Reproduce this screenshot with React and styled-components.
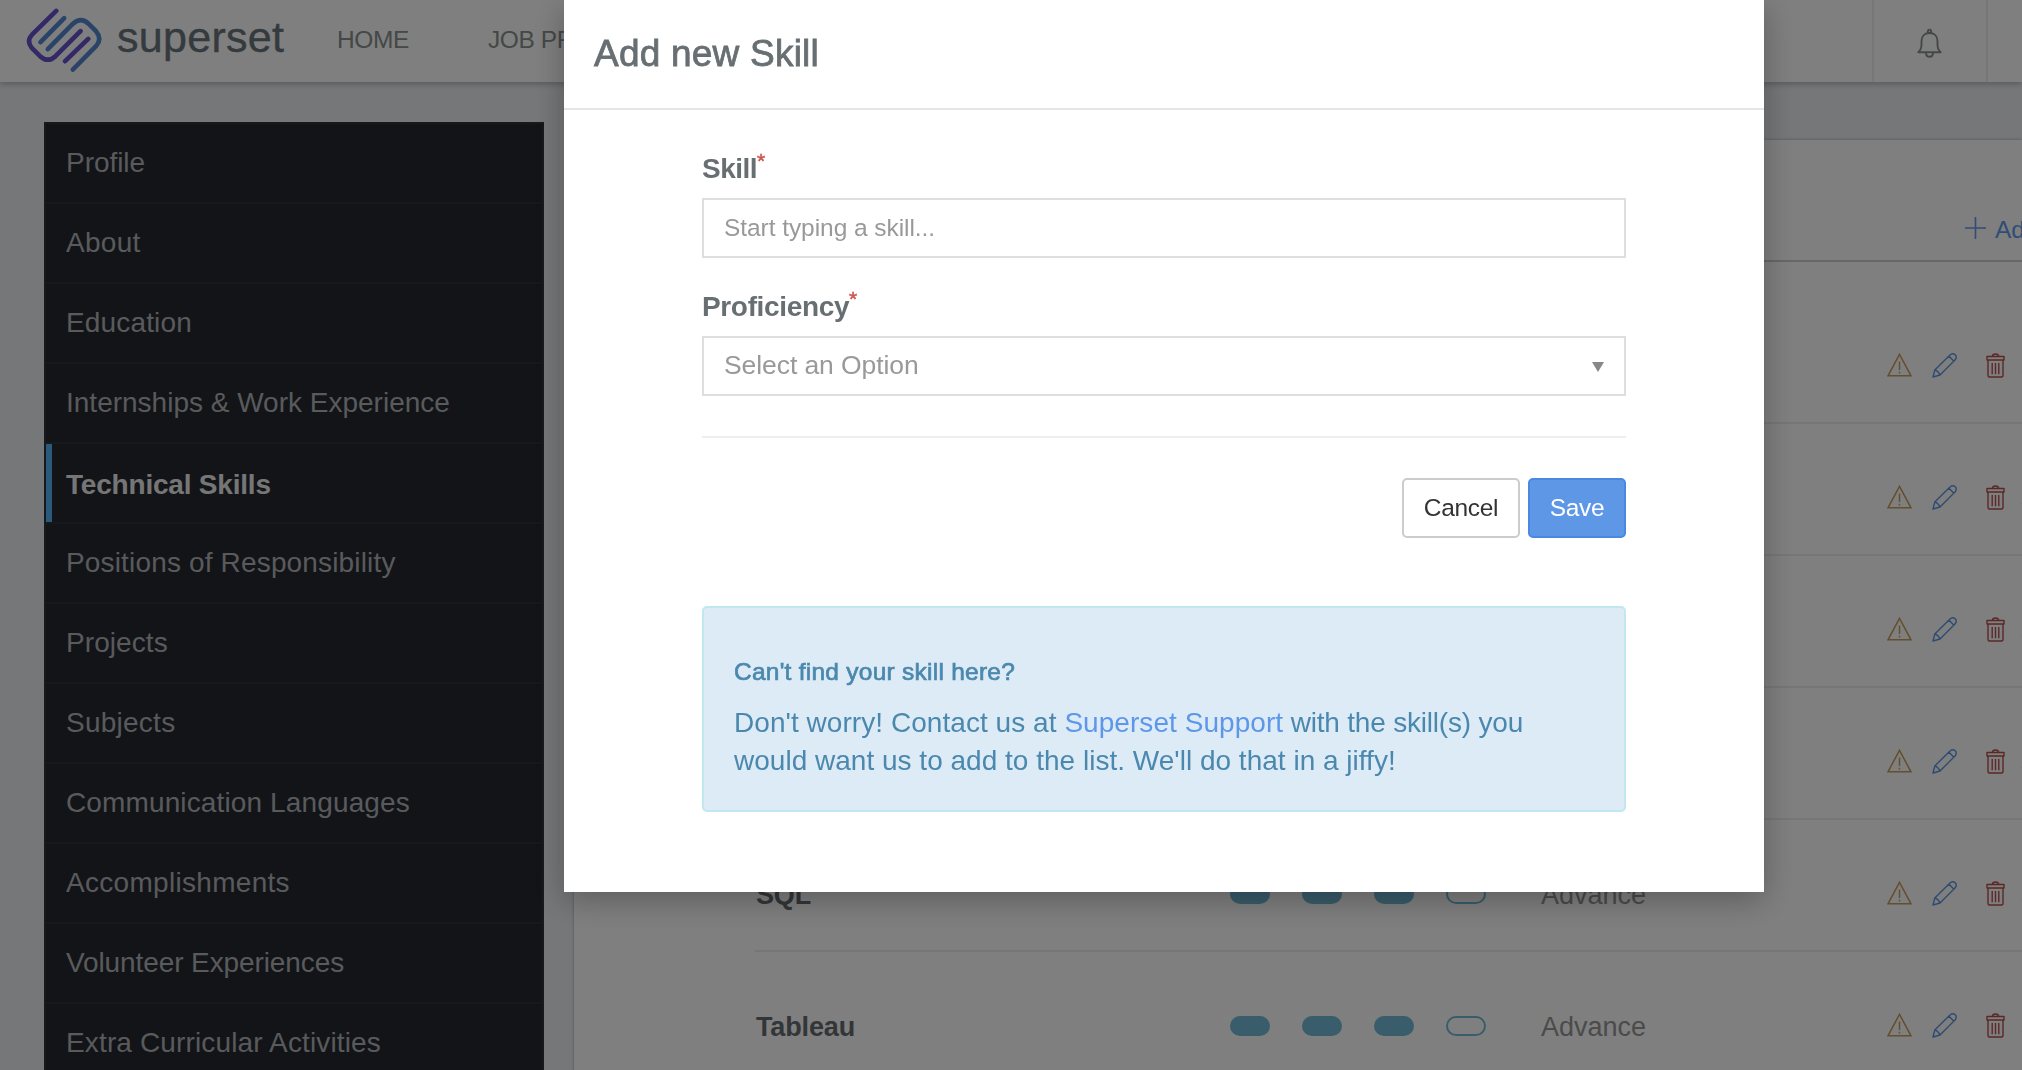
import React from 'react';
import styled, { createGlobalStyle } from 'styled-components';

const GlobalStyle = createGlobalStyle`
  * { box-sizing: border-box; }
  body {
    margin: 0;
    overflow: hidden;
    background: #ebeef2;
    font-family: "Liberation Sans", Arial, sans-serif;
    color: #676f73;
  }
  p, h2, h4, ul { margin: 0; padding: 0; }
  svg { display: block; flex: none; fill: none; }
`;

const Page = styled.div`
  height: 1070px;
  overflow: hidden;
`;

/* ---------- top bar ---------- */

const TopBar = styled.header`
  position: relative;
  display: flex;
  height: 82px;
  background: #fff;
  box-shadow: 0 2px 6px rgba(0, 0, 0, 0.25);
`;

const Brand = styled.div`
  display: flex;
  width: 337px;
  padding-left: 24px;
`;

const BrandName = styled.span`
  margin-left: 11px;
  font-size: 43px;
  line-height: 75px;
  letter-spacing: 0.3px;
  color: #69757a;
  -webkit-text-stroke: 0.4px #69757a;
`;

const NavLink = styled.a`
  width: 151px;
  font-size: 24.5px;
  line-height: 80px;
  letter-spacing: -0.4px;
  white-space: nowrap;
  color: #88908d;
`;

const BarActions = styled.div`
  display: flex;
  margin-left: auto;
`;

const BarCell = styled.div`
  display: flex;
  justify-content: center;
  width: ${(p) => p.$width}px;
  padding-top: 28px;
  border-left: 2px solid #eee;
  color: #87918e;
`;

/* ---------- sidebar ---------- */

const Content = styled.main`
  display: flex;
  gap: 30px;
  padding: 40px 0 0 44px;
`;

const Sidebar = styled.ul`
  flex: none;
  width: 500px;
  height: 1000px;
  border: 2px solid #303335;
  background: #252830;
  list-style: none;
`;

const SidebarItem = styled.li`
  height: 80px;
  padding-left: 20px;
  border-bottom: 2px solid #2e3132;
  font-size: 28px;
  line-height: 78px;
  letter-spacing: ${(p) => p.$tracking ?? 0.08}px;
  color: #b2b4b8;
  ${(p) =>
    p.$active &&
    `
    box-shadow: inset 6px 0 #58b4fa;
    font-weight: 700;
    letter-spacing: -0.2px;
    line-height: 81px;
    color: #ececec;
  `}
`;

/* ---------- skills panel ---------- */

const Panel = styled.section`
  flex: 1;
  margin-top: 18px;
  height: 1000px;
  min-width: 0;
  background: #fff;
  box-shadow: 0 0 3px rgba(0, 0, 0, 0.3);
`;

const PanelHead = styled.div`
  display: flex;
  justify-content: flex-end;
  height: 122px;
  border-bottom: 2px solid #cfcfcf;
`;

const AddLink = styled.a`
  display: flex;
  gap: 9px;
  width: 57px;
  padding-top: 76px;
  font-size: 24.5px;
  line-height: 28px;
  white-space: nowrap;
  color: #5d9cec;

  svg { margin-top: 1px; }
`;

const SkillList = styled.div`
  padding: 30px 0 0 181px;
`;

const SkillRow = styled.div`
  display: flex;
  align-items: center;
  height: 132px;
  padding-top: 18px;
  border-bottom: 2px solid #ededed;
`;

const SkillName = styled.div`
  width: 475px;
  flex: none;
  padding: 2px 0 0 1px;
  font-size: 27px;
  font-weight: 700;
  letter-spacing: -0.15px;
  color: #666c70;
`;

const Meter = styled.div`
  display: flex;
  flex: none;
  gap: 32px;
  width: 311px;
`;

const Pill = styled.span`
  width: 40px;
  height: 20px;
  border: 2px solid #72bad6;
  border-radius: 10px;
  background: ${(p) => (p.$filled ? '#72bad6' : 'transparent')};
`;

const LevelName = styled.div`
  flex: none;
  width: 346px;
  padding-top: 2px;
  font-size: 27px;
  color: #969696;
`;

const RowActions = styled.div`
  display: flex;
  flex: none;
  align-items: center;
  padding-bottom: 2px;

  svg:nth-child(2) { margin-left: 20px; }
  svg:nth-child(3) { margin-left: 29px; }
  svg:nth-child(4) { margin-left: 15px; }
`;

/* ---------- dialog ---------- */

const Overlay = styled.div`
  position: fixed;
  inset: 0;
  background: rgba(0, 0, 0, 0.5);
`;

const Dialog = styled.div`
  width: 1200px;
  height: 892px;
  margin-left: 564px;
  background: #fff;
  box-shadow: 0 8px 30px rgba(0, 0, 0, 0.28);
`;

const DialogTitle = styled.h2`
  height: 110px;
  padding-left: 30px;
  border-bottom: 2px solid #e5e5e5;
  font-size: 37px;
  font-weight: 400;
  line-height: 108px;
  letter-spacing: 0.22px;
  color: #676f73;
  -webkit-text-stroke: 0.8px #676f73;
`;

const DialogBody = styled.div`
  padding: 38px 138px 0;
`;

const Field = styled.div`
  height: 138px;
`;

const Label = styled.label`
  display: flex;
  height: 50px;
  font-size: 28px;
  font-weight: 700;
  line-height: 41px;
  letter-spacing: ${(p) => p.$tracking}px;
`;

const Required = styled.span`
  font-size: 21px;
  font-weight: 400;
  line-height: 26px;
  color: #cf5650;
  -webkit-text-stroke: 0.5px #cf5650;
`;

const Control = styled.div`
  display: flex;
  align-items: center;
  justify-content: space-between;
  height: 60px;
  padding: 0 20px ${(p) => p.$lift ?? 0}px;
  border: 2px solid #dedede;
  font-size: ${(p) => p.$size}px;
  letter-spacing: ${(p) => p.$tracking}px;
  color: #999;
`;

const Caret = styled.span`
  margin-top: 2px;
  border: 6px solid transparent;
  border-top: 10px solid #888;
  border-bottom: 0;
`;

const Divider = styled.div`
  height: 2px;
  margin-top: 12px;
  background: #eee;
`;

const Buttons = styled.div`
  display: flex;
  justify-content: flex-end;
  gap: 8px;
  margin-top: 40px;
`;

const Button = styled.button`
  width: ${(p) => p.$width}px;
  height: 60px;
  padding: 0 0 1px;
  border: 2px solid ${(p) => (p.$primary ? '#4a89e3' : '#ccc')};
  border-radius: 5px;
  background: ${(p) => (p.$primary ? '#5e97e6' : '#fff')};
  color: ${(p) => (p.$primary ? '#fff' : '#333')};
  font-family: inherit;
  font-size: 24.5px;
  letter-spacing: -0.3px;
`;

const Notice = styled.div`
  height: 206px;
  margin-top: 68px;
  padding: 49px 30px 0;
  border: 2px solid #c1e7ef;
  border-radius: 5px;
  background: #ddebf6;
  color: #4b88ae;
`;

const NoticeTitle = styled.h4`
  font-size: 24.5px;
  font-weight: 400;
  line-height: 30px;
  letter-spacing: 0.25px;
  -webkit-text-stroke: 0.7px #4b88ae;
`;

const NoticeText = styled.p`
  margin-top: 17px;
  font-size: 28px;
  line-height: 38px;
  letter-spacing: ${(p) => p.$tracking || 0}px;
  white-space: nowrap;
  & + & { margin-top: 0; }
`;

const SupportLink = styled.a`
  color: #5e97ea;
`;

const Tail = styled.span`
  letter-spacing: -0.2px;
`;

/* ---------- drawings ---------- */

const Logo = () => (
  <svg width="82" height="82" viewBox="23.500 -0.200 82 82" strokeWidth="4.600" strokeLinecap="round" strokeLinejoin="round">
    <path stroke="#6453cc" d="M55.700 10.700 31.500 34.500Q25.500 41 31.500 48L39.500 56Q47.500 63 55 56L80 31M87.700 38.700 64.600 61" />
    <path stroke="#5486d2" d="M63.700 18 40 42M47.300 49 72.500 23.500Q80.500 16.500 88 23.500L95.500 31Q102 38.500 95.500 46L72.300 69.500" />
  </svg>
);

const BellIcon = () => (
  <svg width="26" height="32" viewBox="0.500 0 26 32" stroke="currentColor" strokeWidth="1.900" strokeLinejoin="round">
    <path d="M1.800 24.200H24.200C21.400 22 21 20 21 16.500V13C21 8 17.600 5 13 5S5 8 5 13V16.500C5 20 4.600 22 1.800 24.200Z" />
    <circle cx="13" cy="3.300" r="1.700" />
    <path d="M9.500 24.500C9.500 30.200 16.500 30.200 16.500 24.500" />
  </svg>
);

const PlusIcon = () => (
  <svg width="21" height="22" viewBox="0 0 21 22" stroke="#5d9cec" strokeWidth="1.600">
    <path d="M10.500 0V22M0 11H21" />
  </svg>
);

const WarnIcon = () => (
  <svg width="25" height="24" viewBox="0 0 25 24" stroke="#c79f5c" strokeWidth="1.500">
    <path d="M12.500 1.300 24 22.800H1ZM12.500 8.500V17M12.500 18.700V20.500" />
  </svg>
);

const PencilIcon = () => (
  <svg width="25" height="25" viewBox="0 0 25 25" stroke="#5d95de" strokeWidth="1.400" strokeLinejoin="round">
    <path d="M1 24 2.800 17 18 2C20 .3 22 .6 23.200 1.800S24.500 5 23 7L8 22ZM17 3.200 21.700 8M2.800 17C5 17.500 7.500 20 8 22" />
  </svg>
);

const TrashIcon = () => (
  <svg width="19" height="25" viewBox="0 0 19 25" stroke="#b54f4d" strokeWidth="1.400" strokeLinejoin="round">
    <path d="M1 3.500H18V7H1ZM2 7V22.500Q2 24 3.500 24H15.500Q17 24 17 22.500V7M6.300 3.500Q6.500 1 9.500 1T12.700 3.500M6.200 10V21.300M9.500 10V21.300M12.800 10V21.300" />
  </svg>
);

const MoveIcon = () => (
  <svg width="20" height="24" viewBox="0 0 20 24" stroke="#5d9cec" strokeWidth="1.200">
    <path d="M3.500 16.500A3 3 0 0 0 3.500 21M3.500 16.500H19M3.500 21H19" />
  </svg>
);

const sections = [
  { title: 'Profile', tracking: -0.05 },
  { title: 'About', tracking: 0.3 },
  { title: 'Education', tracking: 0.15 },
  { title: 'Internships & Work Experience', tracking: 0 },
  { title: 'Technical Skills', active: true },
  { title: 'Positions of Responsibility', tracking: 0.16 },
  { title: 'Projects' },
  { title: 'Subjects', tracking: 0.25 },
  { title: 'Communication Languages', tracking: 0.13 },
  { title: 'Accomplishments', tracking: 0.3 },
  { title: 'Volunteer Experiences', tracking: -0.1 },
  { title: 'Extra Curricular Activities', tracking: 0.14 },
];

const skills = [
  { id: 1 }, { id: 2 }, { id: 3 }, { id: 4 },
  { id: 5, name: 'SQL', level: 3, label: 'Advance' },
  { id: 6, name: 'Tableau', level: 3, label: 'Advance' },
];

const Skill = ({ name, level, label }) => (
  <SkillRow>
    <SkillName>{name}</SkillName>
    <Meter>{level && [1, 2, 3, 4].map((n) => <Pill key={n} $filled={n <= level} />)}</Meter>
    <LevelName>{label}</LevelName>
    <RowActions>
      <WarnIcon />
      <PencilIcon />
      <TrashIcon />
      <MoveIcon />
    </RowActions>
  </SkillRow>
);

export default function App() {
  return (
    <Page>
      <GlobalStyle />
      <TopBar>
        <Brand>
          <Logo />
          <BrandName>superset</BrandName>
        </Brand>
        <NavLink>HOME</NavLink>
        <NavLink>JOB PROFILES</NavLink>
        <BarActions>
          <BarCell $width={114}><BellIcon /></BarCell>
          <BarCell $width={36} />
        </BarActions>
      </TopBar>

      <Content>
        <Sidebar>
          {sections.map((s) => (
            <SidebarItem key={s.title} $active={s.active} $tracking={s.tracking}>{s.title}</SidebarItem>
          ))}
        </Sidebar>
        <Panel>
          <PanelHead>
            <AddLink><PlusIcon />Add</AddLink>
          </PanelHead>
          <SkillList>
            {skills.map((s) => <Skill key={s.id} {...s} />)}
          </SkillList>
        </Panel>
      </Content>

      <Overlay>
        <Dialog role="dialog">
          <DialogTitle>Add new Skill</DialogTitle>
          <DialogBody>
            <Field>
              <Label $tracking={-0.5}>Skill<Required>*</Required></Label>
              <Control $size={24.5} $tracking={-0.06}>Start typing a skill...</Control>
            </Field>
            <Field>
              <Label $tracking={-0.35}>Proficiency<Required>*</Required></Label>
              <Control $size={26.5} $tracking={-0.08} $lift={1}>Select an Option<Caret /></Control>
            </Field>
            <Divider />
            <Buttons>
              <Button $width={118}>Cancel</Button>
              <Button $width={98} $primary>Save</Button>
            </Buttons>
            <Notice>
              <NoticeTitle>Can't find your skill here?</NoticeTitle>
              <NoticeText $tracking={0.05}>
                Don't worry! Contact us at <SupportLink>Superset Support</SupportLink>
                <Tail> with the skill(s) you</Tail>
              </NoticeText>
              <NoticeText $tracking={0.01}>would want us to add to the list. We'll do that in a jiffy!</NoticeText>
            </Notice>
          </DialogBody>
        </Dialog>
      </Overlay>
    </Page>
  );
}
